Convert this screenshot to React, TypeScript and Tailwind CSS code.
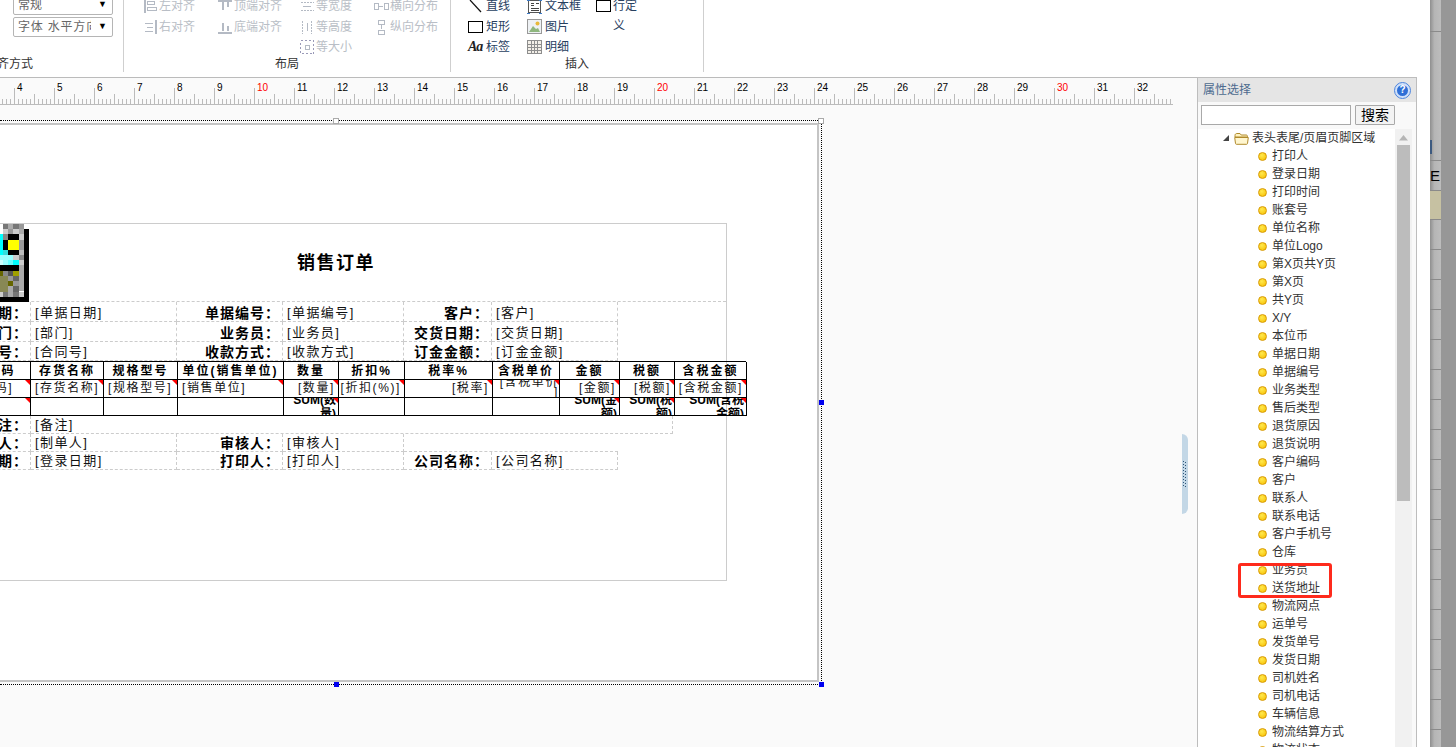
import { ReactNode } from "react";

const treeItems = [
  "打印人", "登录日期", "打印时间", "账套号", "单位名称", "单位Logo", "第X页共Y页", "第X页", "共Y页", "X/Y",
  "本位币", "单据日期", "单据编号", "业务类型", "售后类型", "退货原因", "退货说明", "客户编码", "客户", "联系人",
  "联系电话", "客户手机号", "仓库", "业务员", "送货地址", "物流网点", "运单号", "发货单号", "发货日期", "司机姓名",
  "司机电话", "车辆信息", "物流结算方式", "物流状态",
];

const rulerNums = Array.from({ length: 30 }, (_, i) => i + 3);

const headCols = ["存货编码", "存货名称", "规格型号", "单位(销售单位)", "数量", "折扣%", "税率%", "含税单价", "金额", "税额", "含税金额"];

const bodyCols = [
  { t: "[存货编码]", right: false },
  { t: "[存货名称]", right: false },
  { t: "[规格型号]", right: false },
  { t: "[销售单位]", right: false },
  { t: "[数量]", right: true },
  { t: "[折扣(%)]", right: true },
  { t: "[税率]", right: true },
  { t: "[含税单价]", right: false, wrap: true },
  { t: "[金额]", right: true },
  { t: "[税额]", right: true },
  { t: "[含税金额]", right: true },
];

const sumCols: (string[] | null)[] = [
  null, null, null, null, ["SUM(数", "量)"], null, null, null, ["SUM(金", "额)"], ["SUM(税", "额)"], ["SUM(含税", "金额)"],
];

// logo pixels: [x, y, w, h, fill]
const logoPixels: [number, number, number, number, string][] = [
  [0, 0, 3, 5, "#ffffff"], [3, 0, 5, 5, "#777777"], [8, 0, 5, 5, "#aaaaaa"], [13, 0, 6, 5, "#777777"], [19, 0, 5, 5, "#999999"],
  [0, 5, 3, 5, "#ffffff"], [3, 5, 5, 5, "#cccccc"], [8, 5, 5, 5, "#999999"], [13, 5, 6, 5, "#cccccc"], [19, 5, 5, 5, "#aaaaaa"],
  [0, 10, 3, 6, "#00ffff"], [3, 10, 5, 6, "#888888"], [8, 10, 11, 6, "#000000"], [19, 10, 5, 6, "#cccccc"],
  [0, 16, 3, 10, "#00ffff"], [3, 16, 5, 10, "#000000"], [8, 16, 11, 10, "#ffff00"], [19, 16, 5, 10, "#999999"],
  [0, 26, 3, 5, "#00ffff"], [3, 26, 5, 5, "#33dddd"], [8, 26, 11, 5, "#000000"], [19, 26, 5, 5, "#bbbbbb"],
  [0, 31, 13, 5, "#99ffff"], [13, 31, 6, 5, "#cccccc"], [19, 31, 5, 5, "#888888"],
  [0, 36, 3, 5, "#ccffff"], [3, 36, 5, 5, "#99ffff"], [8, 36, 5, 5, "#66ffff"], [13, 36, 6, 5, "#00ffff"], [19, 36, 5, 5, "#cccccc"],
  [0, 41, 19, 6, "#000000"], [19, 41, 5, 6, "#aaaaaa"],
  [0, 47, 3, 5, "#666600"], [3, 47, 5, 5, "#888888"], [8, 47, 5, 5, "#555555"], [13, 47, 6, 5, "#a0a000"], [19, 47, 5, 5, "#aaaaaa"],
  [0, 52, 8, 10, "#888855"], [8, 52, 5, 5, "#999999"], [13, 52, 6, 5, "#666666"], [19, 52, 5, 15, "#aaaaaa"],
  [8, 57, 5, 5, "#666600"], [13, 57, 6, 5, "#999999"],
  [0, 62, 8, 6, "#888855"], [8, 62, 5, 6, "#aaaaaa"], [13, 62, 6, 6, "#666666"],
  [0, 68, 3, 5, "#cccccc"], [3, 68, 5, 5, "#777777"], [8, 68, 5, 5, "#aaaaaa"], [13, 68, 6, 5, "#777777"], [19, 68, 5, 5, "#cccccc"],
  [0, 73, 24, 5, "#000000"], [24, 5, 5, 73, "#000000"],
];

const DisabledIcon = ({ kind }: { kind: string }) => {
  const c = "#b4bac4";
  return (
    <svg width="16" height="16" viewBox="0 0 16 16" fill="none" stroke={c} strokeWidth="1" shapeRendering="crispEdges">
      {kind === "left" && (<><path d="M2.5 1v14" strokeWidth="2" /><rect x="5" y="3" width="7" height="3" /><rect x="5" y="9" width="9" height="3" /></>)}
      {kind === "right" && (<><path d="M13.5 1v14" strokeWidth="2" /><path d="M3 4h8M5 8h6M3 12h8" /></>)}
      {kind === "top" && (<><path d="M1 2.5h14" strokeWidth="2" /><path d="M5.5 4v8M10.5 4v5" strokeWidth="2" /></>)}
      {kind === "bottom" && (<><path d="M1 13.5h14" strokeWidth="2" /><path d="M5.5 4v8M10.5 7v5" strokeWidth="2" /></>)}
      {kind === "width" && (<><path d="M1.5 4h13M1.5 12h13" strokeDasharray="2 1" /><path d="M4 8h8" /></>)}
      {kind === "height" && (<><path d="M3.5 1.5v13M12.5 1.5v13" strokeDasharray="2 1" /><path d="M8 4v8" /></>)}
      {kind === "hdist" && (<><rect x="1" y="5" width="4" height="6" /><rect x="11" y="5" width="4" height="6" /><path d="M6 8h4" /></>)}
      {kind === "vdist" && (<><rect x="5" y="1" width="6" height="4" /><rect x="5" y="11" width="6" height="4" /><path d="M8 6v4" /></>)}
      {kind === "size" && (<><rect x="1.5" y="1.5" width="13" height="13" strokeDasharray="2 2" stroke="#9a9ab8" /><rect x="6" y="6" width="4" height="4" /></>)}
    </svg>
  );
};

const AlignBtn = ({ kind, label, className = "" }: { kind: string; label: string; className?: string }) => (
  <div className={`flex items-center gap-[1px] text-[#b9bec6] ${className}`}>
    <DisabledIcon kind={kind} />
    <span className="whitespace-nowrap">{label}</span>
  </div>
);

const InsertBtn = ({ icon, label }: { icon: ReactNode; label: string }) => (
  <div className="flex items-center text-[#27405f]">
    <span className="flex w-[18px] shrink-0 items-center">{icon}</span>
    <span className="whitespace-nowrap">{label}</span>
  </div>
);

const Ribbon = () => (
  <div className="flex h-[77px] shrink-0 bg-white text-[12px]">
    {/* 对齐方式 */}
    <div className="mb-[5px] flex w-[124px] shrink-0 flex-col overflow-hidden border-r border-[#cfcfcf]">
      <div className="-mt-[6px] ml-[13px] flex w-[100px] flex-col gap-[2px] text-[#666]">
        <div className="flex h-[21px] items-center justify-between rounded-[2px] border border-[#b5b5b5] pl-[4px] pr-[5px]">
          <span>常规</span>
          <span className="text-[9px] text-black">▼</span>
        </div>
        <div className="flex h-[20px] items-center justify-between rounded-[2px] border border-[#b5b5b5] pl-[4px] pr-[5px]">
          <span className="w-[73px] overflow-hidden whitespace-nowrap tracking-[0.8px]">字体 水平方向</span>
          <span className="text-[9px] text-black">▼</span>
        </div>
      </div>
      <div className="-ml-[15px] mt-auto leading-[16px] text-[#333]">对齐方式</div>
    </div>

    {/* 布局 */}
    <div className="mb-[5px] flex w-[327px] shrink-0 flex-col overflow-hidden border-r border-[#cfcfcf]">
      <div className="-mt-[4px] grid h-[58px] grid-cols-[75px_82px_74px_auto] auto-rows-[20.5px] pl-[18px]">
        <AlignBtn kind="left" label="左对齐" />
        <AlignBtn kind="top" label="顶端对齐" />
        <AlignBtn kind="width" label="等宽度" />
        <AlignBtn kind="hdist" label="横向分布" />
        <AlignBtn kind="right" label="右对齐" />
        <AlignBtn kind="bottom" label="底端对齐" />
        <AlignBtn kind="height" label="等高度" />
        <AlignBtn kind="vdist" label="纵向分布" />
        <AlignBtn kind="size" label="等大小" className="col-start-3" />
      </div>
      <div className="mt-auto text-center leading-[16px] text-[#333]">布局</div>
    </div>

    {/* 插入 */}
    <div className="mb-[5px] flex w-[253px] shrink-0 flex-col overflow-hidden border-r border-[#cfcfcf]">
      <div className="-mt-[4px] grid h-[58px] grid-cols-[59px_69px_auto] auto-rows-[20.5px] pl-[17px]">
        <InsertBtn
          label="直线"
          icon={
            <svg width="15" height="14" viewBox="0 0 15 14">
              <path d="M2 1l11 12" stroke="#111" strokeWidth="1.2" />
            </svg>
          }
        />
        <InsertBtn
          label="文本框"
          icon={
            <svg width="15" height="15" viewBox="0 0 15 15" fill="none" shapeRendering="crispEdges">
              <rect x="1.5" y="1.5" width="12" height="12" stroke="#555" />
              <path d="M4 4h3M4 6h3M9 4h3M4 9h8M4 11h8" stroke="#444" />
              <path d="M0 1h3M12 1h3M0 14h3M12 14h3" stroke="#3b78c4" />
            </svg>
          }
        />
        <div className="row-span-2 flex items-start text-[#27405f]">
          <span className="mt-[4px] h-[12px] w-[15px] shrink-0 border border-black" />
          <span className="ml-[2px] w-[26px] leading-[20px]">行定义</span>
        </div>
        <InsertBtn label="矩形" icon={<span className="block h-[12px] w-[15px] border border-black" />} />
        <InsertBtn
          label="图片"
          icon={
            <svg width="15" height="15" viewBox="0 0 15 15" shapeRendering="crispEdges">
              <rect x="0.5" y="0.5" width="14" height="14" fill="#eef1f4" stroke="#999" />
              <circle cx="10.5" cy="4.5" r="2" fill="#e8b93a" shapeRendering="auto" />
              <path d="M2 13l4-6 3 3 2-1 2 4z" fill="#8fb77e" shapeRendering="auto" />
            </svg>
          }
        />
        <InsertBtn
          label="标签"
          icon={<span className="font-['Liberation_Serif',serif] text-[14px] font-bold italic leading-none tracking-[-1px] text-[#222]">Aa</span>}
        />
        <InsertBtn
          label="明细"
          icon={
            <svg width="15" height="14" viewBox="0 0 15 14" fill="#f3efe8" stroke="#8d8d8d" shapeRendering="crispEdges">
              <rect x="0.5" y="0.5" width="14" height="13" />
              <path d="M0 4.5h15M0 7.5h15M0 10.5h15M4.5 0v14M7.5 0v14M10.5 0v14" fill="none" />
            </svg>
          }
        />
      </div>
      <div className="mt-auto text-center leading-[16px] text-[#333]">插入</div>
    </div>
  </div>
);

const Ruler = () => (
  <div className="h-[27px] w-[1173px] shrink-0 overflow-hidden border-b border-[#bbb]">
    <div className="-ml-[26px] flex h-full w-max">
      {rulerNums.map((n) => (
        <div key={n} className="relative h-full w-[40px] shrink-0">
          <span className={`ml-[3px] block pt-[4px] text-[10px] leading-[12px] ${n % 10 === 0 ? "text-[#f00]" : "text-black"}`}>{n}</span>
          <svg className="absolute bottom-0 left-0" width="40" height="16" viewBox="0 0 40 16" stroke="#bbb" shapeRendering="crispEdges">
            <path d="M0.5 0v16M20.5 6v10M4.5 11v5M8.5 11v5M12.5 11v5M16.5 11v5M24.5 11v5M28.5 11v5M32.5 11v5M36.5 11v5" />
          </svg>
        </div>
      ))}
    </div>
  </div>
);

const Flag = () => <span className="absolute right-0 top-0 h-0 w-0 border-l-[5px] border-t-[5px] border-l-transparent border-t-[#f00]" />;

// line height comes from the row, the upper rows are a little taller
const Label = ({ t }: { t: string }) => (
  <div className="overflow-hidden whitespace-nowrap border-b border-r border-dashed border-[#ccc] pr-[2px] text-right text-[14px] font-bold tracking-[1px] text-black">{t}：</div>
);

const Value = ({ t }: { t: string }) => (
  <div className="overflow-hidden whitespace-nowrap border-b border-r border-dashed border-[#ccc] pl-[4px] text-[13px] tracking-[1.4px] text-[#111]">[{t}]</div>
);

const fieldGrid = "grid grid-cols-[100px_146px_106px_121px_88px_126px]";

const ReportTable = () => (
  <div className="ml-[23px] grid w-[802px] grid-cols-[86px_73px_74px_106px_55px_66px_88px_67px_60px_55px_72px] border-l border-t border-black">
    {headCols.map((h) => (
      <div key={h} className="flex h-[18px] items-center justify-center whitespace-nowrap border-b border-r border-black text-[12px] font-bold tracking-[2px] text-black">{h}</div>
    ))}
    {bodyCols.map((c) => (
      <div
        key={c.t}
        className={`relative h-[18px] overflow-hidden border-b border-r border-black text-[12px] tracking-[1.6px] text-[#111] ${c.right ? "pr-[3px] text-right" : "pl-[4px] text-left"} ${c.wrap ? "leading-[10px]" : "whitespace-nowrap leading-[17px]"}`}
      >
        {c.wrap ? (
          <div className="-mt-[3px] text-right">
            [含税单价
            <br />]
          </div>
        ) : (
          c.t
        )}
        <Flag />
      </div>
    ))}
    {sumCols.map((c, i) => (
      <div key={i} className="relative flex h-[18px] items-center justify-end overflow-hidden border-b border-r border-black pr-[2px] text-right text-[12px] font-bold leading-[14px] text-black">
        {c && (
          <div className="whitespace-nowrap">
            {c[0]}
            <br />
            {c[1]}
          </div>
        )}
        {(i === 0 || c) && <Flag />}
      </div>
    ))}
  </div>
);

const Report = () => (
  <div className="-ml-[80px] mt-[98px] h-[358px] w-[807px] border border-[#ccc]">
    <div className="flex h-[77px]">
      <svg className="ml-[79px] shrink-0" width="29" height="78" viewBox="0 0 29 78" shapeRendering="crispEdges">
        {logoPixels.map(([x, y, w, h, f], i) => (
          <rect key={i} x={x} y={y} width={w} height={h} fill={f} />
        ))}
      </svg>
      <div className="flex w-[614px] items-center justify-center pt-[2px] text-[18px] font-bold tracking-[1.5px] text-black">销售订单</div>
    </div>

    <div className="ml-[10px] w-[795px] border-t border-dashed border-[#ccc]">
      <div className={`${fieldGrid} h-[20px] leading-[22px]`}>
        <Label t="单据日期" />
        <Value t="单据日期" />
        <Label t="单据编号" />
        <Value t="单据编号" />
        <Label t="客户" />
        <Value t="客户" />
      </div>
      <div className={`${fieldGrid} h-[20px] leading-[22px]`}>
        <Label t="部门" />
        <Value t="部门" />
        <Label t="业务员" />
        <Value t="业务员" />
        <Label t="交货日期" />
        <Value t="交货日期" />
      </div>
      <div className={`${fieldGrid} h-[19px] leading-[20px]`}>
        <Label t="合同号" />
        <Value t="合同号" />
        <Label t="收款方式" />
        <Value t="收款方式" />
        <Label t="订金金额" />
        <Value t="订金金额" />
      </div>
    </div>

    <ReportTable />

    <div className="ml-[10px] leading-[18px]">
      <div className="grid h-[18px] grid-cols-[100px_642px]">
        <Label t="备注" />
        <Value t="备注" />
      </div>
      <div className={`${fieldGrid} h-[18px]`}>
        <Label t="制单人" />
        <Value t="制单人" />
        <Label t="审核人" />
        <Value t="审核人" />
        <div className="col-span-2 border-b border-dashed border-[#ccc]" />
      </div>
      <div className={`${fieldGrid} h-[18px]`}>
        <Label t="登录日期" />
        <Value t="登录日期" />
        <Label t="打印人" />
        <Value t="打印人" />
        <Label t="公司名称" />
        <Value t="公司名称" />
      </div>
    </div>
  </div>
);

const Handle = ({ className }: { className: string }) => <span className={`absolute z-10 block ${className}`} />;

const Designer = () => (
  <div className="relative flex w-[1197px] shrink-0 flex-col overflow-hidden border-t border-[#bbb] bg-[#fafafa]">
    <Ruler />
    <div className="relative mt-[15px] h-[565px] w-[822px] shrink-0 border-y border-r border-dotted border-black">
      <div className="my-[2px] mr-[2px] h-[559px] border-y-2 border-r-2 border-[#c4c4c4] bg-white">
        <Report />
      </div>
      <Handle className="left-[333px] top-[-3px] h-[6px] w-[6px] border border-[#aaa] bg-white" />
      <Handle className="right-[-3px] top-[-3px] h-[6px] w-[6px] border border-[#aaa] bg-white" />
      <Handle className="right-[-3px] top-[279px] h-[5px] w-[5px] bg-[#0000f0]" />
      <Handle className="bottom-[-3px] left-[334px] h-[5px] w-[5px] bg-[#0000f0]" />
      <Handle className="bottom-[-3px] right-[-3px] h-[5px] w-[5px] bg-[#0000f0]" />
    </div>

    {/* splitter */}
    <div className="absolute left-[1182px] top-[356px] flex h-[80px] w-[6px] items-center rounded-r-[6px] bg-[#c3d7e6]">
      <svg width="6" height="27" viewBox="0 0 6 27" fill="#2d5578" shapeRendering="crispEdges">
        {Array.from({ length: 9 }, (_, i) => (
          <g key={i}>
            <rect x="1" y={i * 3} width="1" height="1" />
            <rect x="3" y={i * 3 + 1} width="1" height="1" />
          </g>
        ))}
      </svg>
    </div>
  </div>
);

const FolderIcon = () => (
  <svg width="15" height="13" viewBox="0 0 15 13" className="shrink-0">
    <path d="M1 3.5C1 2 2 1.5 3 1.500h3l1.200 1.500H12c1 0 1.500.5 1.500 1.500V5H1z" fill="#fff4c2" stroke="#b08a2c" strokeWidth="1" />
    <path d="M0.700 5.500h13.600l-.8 6a1 1 0 0 1-1 .8H2.500a1 1 0 0 1-1-.8z" fill="#fff6cf" stroke="#b08a2c" strokeWidth="1" />
  </svg>
);

const PropertyPanel = () => (
  <div className="relative flex w-[220px] shrink-0 flex-col overflow-hidden border-l border-r border-t border-[#bdbdbd] bg-[#f9f9f9] text-[12px]">
    <div className="flex h-[24px] shrink-0 items-center justify-between bg-[#e5e5e5] pl-[5px] pr-[6px]">
      <span className="text-[#4c6a8e]">属性选择</span>
      <span className="flex h-[15px] w-[15px] items-center justify-center rounded-full border-2 border-[#cfe0fa] bg-[#2f6fd6] text-[10px] font-bold leading-none text-white outline outline-1 outline-[#4a84e0]">?</span>
    </div>
    <div className="flex h-[27px] shrink-0 items-start gap-[4px] pl-[3px] pt-[3px]">
      <input className="h-[20px] w-[150px] border border-[#a9a9a9] bg-white" />
      <button className="h-[20px] w-[40px] rounded-[1px] border border-[#a9a9a9] bg-[#f3f3f3] text-[14px] leading-none text-black">搜索</button>
    </div>
    <div className="flex min-h-0 flex-1 pr-[4px]">
      <div className="w-[197px] shrink-0 overflow-hidden bg-white text-[#333]">
        <div className="flex h-[18px] items-center pl-[24px]">
          <svg width="8" height="8" viewBox="0 0 8 8" className="mr-[4px] shrink-0">
            <path d="M7 1v6H1z" fill="#444" />
          </svg>
          <FolderIcon />
          <span className="ml-[3px] whitespace-nowrap">表头表尾/页眉页脚区域</span>
        </div>
        {treeItems.map((t) => (
          <div key={t} className="flex h-[18px] items-center pl-[60px]">
            <span className="h-[9px] w-[9px] shrink-0 rounded-full border border-[#d89a00] bg-[radial-gradient(circle_at_40%_35%,#ffe94d,#f7bd00)]" />
            <span className="ml-[5px] whitespace-nowrap">{t}</span>
          </div>
        ))}
      </div>
      <div className="flex w-[17px] shrink-0 flex-col items-center bg-[#f1f1f1]">
        <svg width="9" height="6" viewBox="0 0 9 6" className="mt-[6px] shrink-0">
          <path d="M4.500 0l4.500 5.500H0z" fill="#b5b5b5" />
        </svg>
        <div className="mt-[4px] h-[356px] w-[13px] bg-[#bcbcbc]" />
      </div>
    </div>
    {/* red highlight drawn on the screenshot */}
    <div className="absolute left-[40px] top-[485px] h-[35px] w-[94px] rounded-[3px] border-[3px] border-[#fe2a1c]" />
  </div>
);

const DimmedStrip = () => (
  <div className="flex w-[26px] shrink-0">
    <div className="flex w-[11px] shrink-0 flex-col bg-[linear-gradient(90deg,#8f8f8f,#b5b5b5_40%,#bdbdbd)]">
      <div className="h-[32px] shrink-0 border-b border-[#8a8a8a]" />
      <div className="h-[129px] shrink-0 border-b border-[#8a8a8a] pt-[108px]">
        <div className="h-[14px] w-[2px] bg-[#3d5a80]" />
      </div>
      <div className="flex h-[30px] shrink-0 items-center border-b border-[#8a8a8a] font-['Liberation_Sans',sans-serif] text-[15px] leading-none text-black">E</div>
      <div className="h-[29px] shrink-0 border-b border-[#8a8a8a] bg-[#c6c1a2]" />
      {Array.from({ length: 18 }, (_, i) => (
        <div key={i} className="h-[30px] shrink-0 border-b border-[#8a8a8a]" />
      ))}
    </div>
    <div className="flex-1 bg-[#979797]" />
  </div>
);

export default function App() {
  return (
    <div className="flex h-[747px] w-[1456px] overflow-hidden bg-white font-['Liberation_Sans','Noto_Sans_CJK_SC',sans-serif]">
      <div className="flex w-[1430px] shrink-0 flex-col">
        <Ribbon />
        <div className="flex min-h-0 flex-1">
          <Designer />
          <PropertyPanel />
        </div>
      </div>
      <DimmedStrip />
    </div>
  );
}
